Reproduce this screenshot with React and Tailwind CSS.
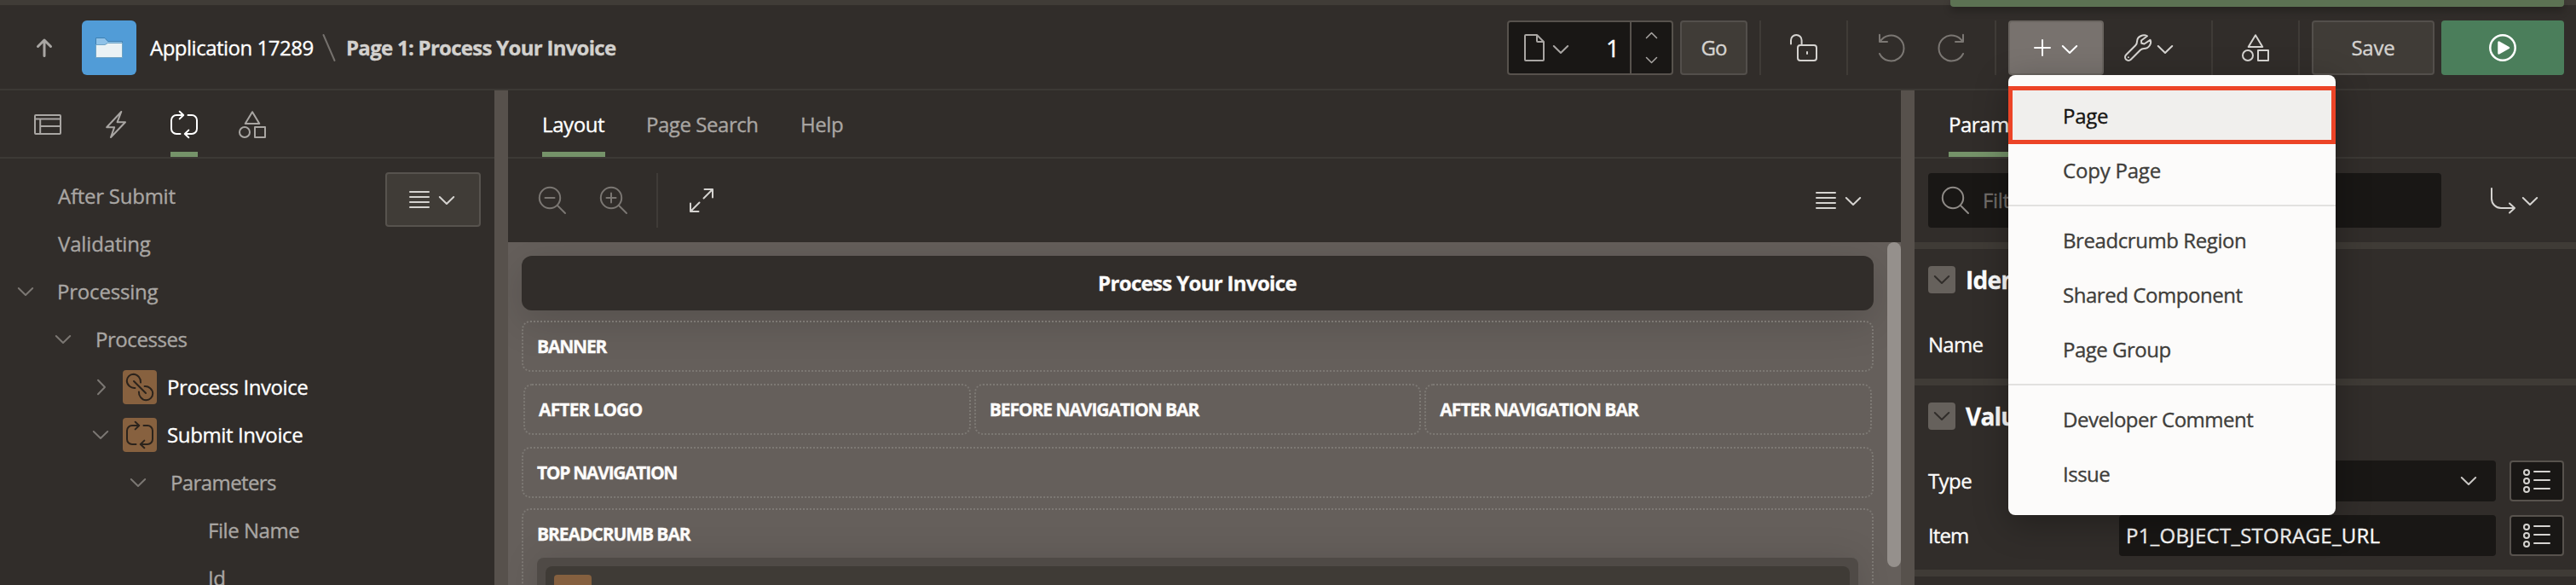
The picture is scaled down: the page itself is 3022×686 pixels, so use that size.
function Icon({ w = 32, h = 32, sw = 2, className = "", children }) {
  return (
    <svg
      width={w}
      height={h}
      viewBox={`0 0 ${w} ${h}`}
      fill="none"
      stroke="currentColor"
      strokeWidth={sw}
      strokeLinecap="round"
      strokeLinejoin="round"
      className={`shrink-0 overflow-visible ${className}`}
    >
      {children}
    </svg>
  );
}

const ChevronDown = ({ className = "" }) => (
  <Icon w={18} h={10} className={className}><path d="M.8 1 9 9l8.2-8" /></Icon>
);
const ChevronRight = ({ className = "" }) => (
  <Icon w={10} h={18} className={className}><path d="M1 .8 9 9l-8 8.2" /></Icon>
);
const Hamburger = ({ className = "" }) => (
  <Icon w={24} h={20} className={className}><path d="M1 1h22M1 7h22M1 13h22M1 19h22" /></Icon>
);
const LoopIcon = ({ className = "" }) => (
  <Icon className={className}>
    <path d="M11.5 27H7a6 6 0 0 1-6-6V11a6 6 0 0 1 6-6h8M10.7.8 15.2 5l-4.5 4.4M20.5 5H25a6 6 0 0 1 6 6v10a6 6 0 0 1-6 6h-8M21.3 22.6 16.8 27l4.5 4.2" />
  </Icon>
);
const LinkIcon = () => (
  <Icon w={40} h={40}>
    <path d="M21 14.6C21.5 10 17.5 4.8 12.5 4.8A7.9 7.9 0 0 0 4.8 12.6C4.8 17.4 9.6 21.6 14.4 21M13 13l14 14M18.9 25.4C18.5 30 22.5 35.2 27.5 35.2A7.9 7.9 0 0 0 35.2 27.4C35.2 22.6 30.4 18.4 25.6 19" />
  </Icon>
);
const ShapesIcon = ({ className = "" }) => (
  <Icon className={className}>
    <path d="M16 1.2 24.3 15H7.7z" />
    <circle cx="7" cy="25" r="6" />
    <rect x="19" y="19" width="12" height="12" />
  </Icon>
);
const SearchIcon = ({ className = "", children }) => (
  <Icon className={className}>
    <circle cx="13" cy="13" r="12.2" />
    <path d="m22 22 9 9" />
    {children}
  </Icon>
);
const ListIcon = () => (
  <Icon w={32} h={28} className="text-[#d5d3d0]">
    <circle cx="4" cy="4" r="3" />
    <circle cx="4" cy="14" r="3" />
    <circle cx="4" cy="24" r="3" />
    <path d="M13 3h18M13 13h18M13 23h18" />
  </Icon>
);

const Divider = ({ className = "" }) => <div className={`h-16 w-0.5 shrink-0 bg-[#3f3b37] ${className}`} />;

function Header() {
  return (
    <header className="relative flex h-[106px] shrink-0 items-start border-t-[6px] border-b-2 border-t-[#403c37] border-b-[#3c3935] pt-[18px]">
      <div className="absolute -top-1.5 left-[2288px] h-2 w-[720px] rounded-b bg-[#5c7253] shadow-[0_4px_10px_rgba(0,0,0,0.3)]" />
      <div className="flex h-16 items-center">
        <Icon w={18} h={22} sw={3} className="ml-[43px] text-[#a9a6a3]">
          <path d="M9 20.5V2M1.5 9.5 9 2l7.5 7.5" />
        </Icon>
        <div className="ml-[35px] flex size-16 items-center justify-center rounded-md bg-[#519cd7]">
          <svg width="32" height="24" viewBox="0 0 32 24">
            <path d="M.5.5H11L14.5 4.5h17V9H.5z" fill="#8fc2e8" stroke="#3f80b2" />
            <path d="M.5 8.5H11L14.5 6.5h17v17H.5z" fill="#eaf2f5" stroke="#6fa3c4" />
          </svg>
        </div>
        <span className="ml-4 w-[203px] tracking-[-0.5px] text-white">Application 17289</span>
        <Icon w={14} h={30} className="text-[#75716d]"><path d="m.5 0 13 30" /></Icon>
        <span className="ml-[13px] font-bold tracking-[-0.72px] text-[#d3d1ce]">Page 1: Process Your Invoice</span>
      </div>

      <div className="mr-3.5 ml-auto flex h-16 items-center">
        <div className="flex h-16 w-[195px] items-center rounded border-2 border-[#57524d] bg-[#191715]">
          <Icon w={24} h={32} className="ml-[18px] text-[#a9a6a3]">
            <path d="M15 1H2a1 1 0 0 0-1 1v28a1 1 0 0 0 1 1h20a1 1 0 0 0 1-1V9zM15 1v7a1 1 0 0 0 1 1h7" />
          </Icon>
          <ChevronDown className="mt-[3px] ml-2.5 text-[#a9a6a3]" />
          <span className="ml-auto pr-3 text-[28px] leading-none text-white">1</span>
          <div className="flex h-full w-[49px] flex-col items-center justify-between border-l-2 border-[#57524d] py-3">
            <Icon w={13} h={7} sw={1.5} className="text-[#a9a6a3]"><path d="M.5 6.5l6-6 6 6" /></Icon>
            <Icon w={13} h={7} sw={1.5} className="text-[#a9a6a3]"><path d="M.5.5l6 6 6-6" /></Icon>
          </div>
        </div>
        <button className="ml-2 h-16 w-[79px] rounded border-2 border-[#534f4b] bg-[#403c37] tracking-[-1px] text-[#d5d3d0]">Go</button>
        <Divider className="ml-3.5" />
        <Icon className="ml-[34px] text-[#d5d3d0]">
          <rect x="9" y="13" width="22" height="18" rx="3" />
          <path d="M1 11.5V7.2a6.3 6.3 0 0 1 12.6 0V13M20 21v2" />
        </Icon>
        <Divider className="ml-[34px]" />
        <Icon w={30} className="ml-9 text-[#7b7773]"><path d="M1 .8V9h9M1.5 9A15 15 0 1 1 1 23" /></Icon>
        <Icon w={30} className="ml-10 text-[#7b7773]"><path d="M29 .8V9h-9M28.5 9A15 15 0 1 0 29 23" /></Icon>
        <Divider className="ml-9" />
        <button className="ml-3.5 flex h-16 w-28 items-center rounded border-2 border-[#6a6560] bg-[#78726e] pl-7 text-white">
          <Icon w={20} h={20}><path d="M10 1v18M1 10h18" /></Icon>
          <ChevronDown className="mt-[3px] ml-[13px]" />
        </button>
        <Icon className="ml-6 text-[#d5d3d0]">
          <path d="M27 2.3C22.5-.2 15 2.5 15 9c0 2-.4 2.8-1.8 4.2L2.2 24.2a3.9 3.9 0 0 0 5.6 5.6L18.8 18.8C20 17.6 21 17 23 17c6.5 0 9.5-6.5 7.5-10.2L23.5 11.5 20.3 10.8 20 7.5z" />
          <path d="M4.9 27.2v.1" />
        </Icon>
        <ChevronDown className="mt-[3px] ml-[7px] text-[#d5d3d0]" />
        <Divider className="ml-[45px]" />
        <ShapesIcon className="ml-[34px] text-[#d5d3d0]" />
        <Divider className="ml-[34px]" />
        <button className="ml-3.5 h-16 w-36 rounded border-2 border-[#534f4b] bg-[#403c37] tracking-[-0.2px] text-[#d5d3d0]">Save</button>
        <button className="ml-2 flex h-16 w-36 items-center justify-center rounded bg-[#4b7e5b] text-white">
          <Icon sw={2.5}>
            <circle cx="16" cy="16" r="14.7" />
            <path d="M11.5 9.5v13l11.5-6.5z" fill="currentColor" />
          </Icon>
        </button>
      </div>
      <CreateMenu />
    </header>
  );
}

const MenuItem = ({ label, tracking, highlighted }) => (
  <div className={highlighted ? "flex h-16 items-center bg-[#f0efed] pl-16 text-[#161513]" : "flex h-16 items-center pl-16"}>
    <span className={tracking}>{label}</span>
  </div>
);
const MenuRule = () => <div className="my-2 h-0.5 bg-[#e2e1df]" />;

function CreateMenu() {
  return (
    <div className="absolute top-[82px] left-[2356px] z-10 h-[516px] w-96 rounded-lg bg-[#fcfbfa] pt-4 text-[#403e3b] shadow-[0_10px_40px_rgba(0,0,0,0.3)]">
      <MenuItem label="Page" tracking="tracking-[-0.3px]" highlighted />
      <MenuItem label="Copy Page" tracking="tracking-[-0.2px]" />
      <MenuRule />
      <MenuItem label="Breadcrumb Region" tracking="tracking-[-0.42px]" />
      <MenuItem label="Shared Component" tracking="tracking-[-0.45px]" />
      <MenuItem label="Page Group" tracking="tracking-[-0.5px]" />
      <MenuRule />
      <MenuItem label="Developer Comment" tracking="tracking-[-0.5px]" />
      <MenuItem label="Issue" tracking="tracking-[-0.5px]" />
      <div className="absolute top-[13px] left-0 h-[68px] w-96 border-[5px] border-[#ec4427]" />
    </div>
  );
}

/* One tree line: indent, optional toggle, optional type icon, label */
const TreeRow = ({ pad, open, closed, icon, gap, label, tracking, strong }) => (
  <div className={`flex h-14 shrink-0 items-center ${pad}`}>
    {open && <ChevronDown className="text-[#7b7773]" />}
    {closed && <ChevronRight className="text-[#7b7773]" />}
    {icon}
    <span className={`${gap} ${tracking} ${strong ? "text-white" : "text-[#a9a6a3]"}`}>{label}</span>
  </div>
);

function TreePanel() {
  const badge = "flex size-10 items-center justify-center rounded bg-[#87613f] text-[#2b231c]";
  return (
    <section className="flex w-[580px] shrink-0 flex-col">
      <div className="flex h-20 shrink-0 border-b-2 border-[#3c3935] pl-10 text-[#a9a6a3]">
        <div className="flex w-8 items-center justify-center pt-0.5">
          <Icon h={24}>
            <rect x="1" y="1" width="30" height="22" rx="1" />
            <path d="M1 5.5h30M7.2 5.5V23M7.2 14H31" />
          </Icon>
        </div>
        <div className="ml-[52px] flex w-6 items-center pt-0.5">
          <Icon w={24}><path d="M18.3 1 1.2 19.2h9L6 31 23 13.2h-9.4z" /></Icon>
        </div>
        <div className="ml-[52px] flex h-[78px] w-8 items-center border-b-[6px] border-[#759369] pt-2 text-white">
          <LoopIcon />
        </div>
        <div className="ml-12 flex w-8 items-center pt-0.5"><ShapesIcon /></div>
      </div>
      <div className="relative flex h-[500px] flex-col overflow-hidden pt-4">
        <button className="absolute top-4 left-[452px] flex h-16 w-28 items-center rounded border-2 border-[#57534e] bg-[#403c37] pl-[26px] text-[#d5d3d0]">
          <Hamburger />
          <ChevronDown className="mt-0.5 ml-[11px]" />
        </button>
        <TreeRow pad="pl-[68px]" gap="" label="After Submit" tracking="tracking-[-0.25px]" />
        <TreeRow pad="pl-[68px]" gap="" label="Validating" tracking="tracking-[-0.15px]" />
        <TreeRow pad="pl-[21px]" open gap="ml-[28px]" label="Processing" tracking="tracking-[-0.2px]" />
        <TreeRow pad="pl-[65px]" open gap="ml-[29px]" label="Processes" tracking="tracking-[-0.45px]" />
        <TreeRow pad="pl-[114px]" closed icon={<div className={`ml-5 ${badge}`}><LinkIcon /></div>} gap="ml-3" label="Process Invoice" tracking="tracking-[-0.42px]" strong />
        <TreeRow pad="pl-[109px]" open icon={<div className={`ml-[17px] ${badge}`}><LoopIcon /></div>} gap="ml-3" label="Submit Invoice" tracking="tracking-[-0.37px]" strong />
        <TreeRow pad="pl-[153px]" open gap="ml-[29px]" label="Parameters" tracking="tracking-[-0.6px]" />
        <TreeRow pad="pl-[244px]" gap="" label="File Name" tracking="tracking-[-0.45px]" />
        <TreeRow pad="pl-[244px]" gap="" label="Id" tracking="tracking-[-0.5px]" />
      </div>
    </section>
  );
}

const Slot = ({ label, tracking, className = "" }) => (
  <div className={`flex h-[60px] items-center rounded-[10px] border-2 border-dotted border-[#7d7974] pl-4 ${className}`}>
    <span className={`text-[21px] font-bold text-[#fcfbfa] ${tracking}`}>{label}</span>
  </div>
);

function LayoutPanel() {
  return (
    <section className="flex w-[1634px] shrink-0 flex-col">
      <div className="flex h-20 shrink-0 border-b-2 border-[#3c3935] pl-10">
        <div className="flex h-[78px] w-[74px] items-center border-b-[6px] border-[#759369] pt-2 tracking-[-0.4px] text-white">Layout</div>
        <div className="ml-12 flex w-[133px] items-center pt-0.5 tracking-[-0.45px] text-[#a9a6a3]">Page Search</div>
        <div className="ml-12 flex items-center pt-0.5 tracking-[-0.45px] text-[#a9a6a3]">Help</div>
      </div>
      <div className="flex h-[98px] shrink-0 items-center pl-9 text-[#7b7773]">
        <SearchIcon><path d="M7.5 13h11" /></SearchIcon>
        <SearchIcon className="ml-10"><path d="M7.5 13h11M13 7.5v11" /></SearchIcon>
        <Divider className="ml-[34px]" />
        <Icon w={28} h={28} className="ml-[37px] text-[#d5d3d0]">
          <path d="M17.5 1H27v9.5M27 1 16.5 11.5M1 17.5V27h9.5M1 27l10.5-10.5" />
        </Icon>
        <Hamburger className="mr-[11px] ml-auto text-[#d5d3d0]" />
        <ChevronDown className="mt-0.5 mr-[47px] text-[#d5d3d0]" />
      </div>
      <div className="flex h-[402px] justify-between overflow-hidden bg-[#655f5b]">
        <div className="ml-4 flex w-[1586px] shrink-0 flex-col pt-4">
          <div className="flex h-16 shrink-0 items-center justify-center rounded-xl bg-[#312d2a] pr-px font-bold tracking-[-0.67px] text-[#fcfbfa] shadow-[0_12px_48px_rgba(0,0,0,0.16)]">
            Process Your Invoice
          </div>
          <Slot className="mt-3 shrink-0" label="BANNER" tracking="tracking-[-1.2px]" />
          <div className="mx-0.5 mt-3.5 grid grid-cols-3 gap-1">
            <Slot label="AFTER LOGO" tracking="tracking-[-0.85px]" />
            <Slot label="BEFORE NAVIGATION BAR" tracking="tracking-[-1.06px]" />
            <Slot label="AFTER NAVIGATION BAR" tracking="tracking-[-0.97px]" />
          </div>
          <Slot className="mt-3.5 shrink-0" label="TOP NAVIGATION" tracking="tracking-[-1.3px]" />
          <div className="mt-3 h-[160px] shrink-0 rounded-[10px] border-2 border-dotted border-[#7d7974] px-4">
            <div className="flex h-14 items-center text-[21px] font-bold tracking-[-1.08px] text-[#fcfbfa]">BREADCRUMB BAR</div>
            <div className="h-24 rounded-lg bg-[#4f4a46] px-2.5 pt-2.5 shadow-[0_0_40px_rgba(0,0,0,0.12)]">
              <div className="h-20 rounded-lg bg-[#3f3b36] px-2.5 pt-2.5">
                <div className="size-11 rounded bg-[#85603f]" />
              </div>
            </div>
          </div>
        </div>
        <div className="h-[381px] w-4 rounded-lg bg-[#95908c]" />
      </div>
    </section>
  );
}

const Section = ({ title, height, children }) => (
  <div className={`shrink-0 border-t-8 border-[#3f3b36] pt-3 pr-3.5 pl-4 ${height}`}>
    <div className="flex h-[48px] items-center">
      <div className="flex size-8 items-center justify-center rounded bg-[#66615c] text-[#312d2a]"><ChevronDown /></div>
      <h2 className="ml-3 text-[28px] leading-none font-bold tracking-[-0.8px] text-white">{title}</h2>
    </div>
    {children}
  </div>
);
const ListButton = () => (
  <button className="ml-4 flex h-12 w-16 shrink-0 items-center justify-center rounded border-2 border-[#57524d] bg-[#191715]"><ListIcon /></button>
);

function PropertyPanel() {
  return (
    <section className="flex w-[776px] shrink-0 flex-col">
      <div className="flex h-20 shrink-0 border-b-2 border-[#3c3935] pl-10">
        <div className="flex h-[78px] items-center border-b-[6px] border-[#759369] pt-2 tracking-[-0.5px] text-white">Param</div>
        <div className="h-[78px] w-14 border-b-[6px] border-[#759369]" />
      </div>
      <div className="flex h-[98px] shrink-0 items-center pl-4">
        <div className="flex h-16 w-[602px] items-center rounded bg-[#191715] pl-4">
          <SearchIcon className="text-[#8f8b87]" />
          <span className="ml-4 tracking-[-0.3px] text-[#716d69]">Filter</span>
        </div>
        <Icon w={29} h={29} className="ml-[58px] text-[#d5d3d0]">
          <path d="M1 0v12a11 11 0 0 0 11 11h16M22 17.5l6 5.5-6 5.5" />
        </Icon>
        <ChevronDown className="mt-0.5 ml-2 text-[#d5d3d0]" />
      </div>
      <Section title="Identification" height="h-40">
        <div className="mt-7 flex h-12 items-center tracking-[-0.75px] text-[#fcfbfa]">Name</div>
      </Section>
      <Section title="Value" height="h-56">
        <div className="mt-7 flex h-12 items-center">
          <span className="w-56 tracking-[-0.6px] text-[#fcfbfa]">Type</span>
          <div className="flex h-12 w-[442px] items-center justify-end rounded bg-[#191715] pr-[23px] text-[#c9c7c4]"><ChevronDown /></div>
          <ListButton />
        </div>
        <div className="mt-4 flex h-12 items-center text-[#fcfbfa]">
          <span className="w-56 tracking-[-0.9px]">Item</span>
          <div className="flex h-12 w-[442px] items-center rounded bg-[#191715] pl-2 tracking-[0.27px]">P1_OBJECT_STORAGE_URL</div>
          <ListButton />
        </div>
      </Section>
      <div className="h-2 shrink-0 bg-[#3f3b36]" />
    </section>
  );
}

const Splitter = () => <div className="w-4 shrink-0 bg-[#57514c]" />;

export default function App() {
  return (
    <div className="flex h-[686px] w-[3022px] flex-col overflow-hidden bg-[#312d2a] font-['Open_Sans',sans-serif] text-2xl whitespace-nowrap [-webkit-text-stroke:0.35px]">
      <Header />
      <main className="flex h-[580px]">
        <TreePanel />
        <Splitter />
        <LayoutPanel />
        <Splitter />
        <PropertyPanel />
      </main>
    </div>
  );
}
